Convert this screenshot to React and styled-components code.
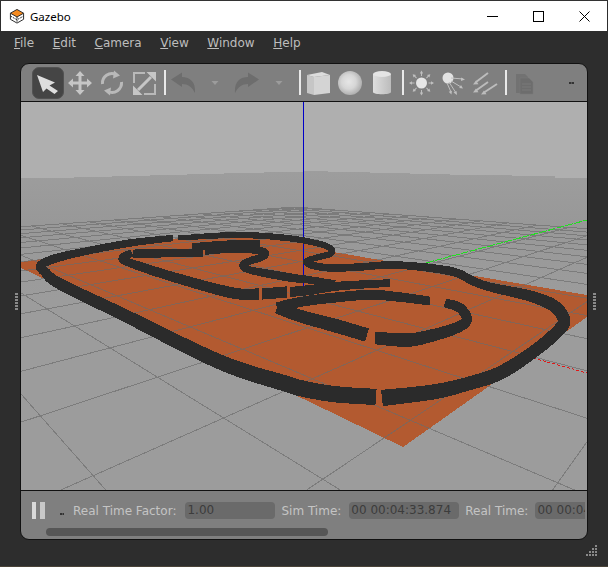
import React from "react";
import styled, { createGlobalStyle } from "styled-components";

const GlobalStyle = createGlobalStyle`
html, body { margin: 0; padding: 0; background: #2d2d2d; }
`;

const Frame = styled.div`
  width: 608px;
  height: 567px;
  display: flex;
  flex-direction: column;
  box-sizing: border-box;
  background: #2d2d2d;
  border-top: 1px solid #333;
  border-bottom: 1px solid #4a4338;
  overflow: hidden;
  font-family: "DejaVu Sans", sans-serif;
  font-size: 12px;
`;

const TitleBar = styled.div`
  height: 30px;
  flex-shrink: 0;
  margin: 0 1px;
  display: flex;
  align-items: center;
  background: #fff;
  color: #000;
  font-family: "Noto Sans", sans-serif;
  font-size: 11.5px;
`;

const AppTitle = styled.div`
  display: flex;
  align-items: center;
  gap: 5px;
  padding-left: 8px;
  flex: 1;
`;

const WinButton = styled.div`
  width: 46px;
  height: 30px;
  display: flex;
  align-items: center;
  justify-content: center;
`;

const MenuBar = styled.div`
  height: 32px;
  flex-shrink: 0;
  display: flex;
  gap: 18.6px;
  padding-left: 14px;
  line-height: 24px;
  color: #bdbdbd;
`;

const MenuKey = styled.span`
  text-decoration: underline;
`;

const Middle = styled.div`
  display: flex;
  flex-shrink: 0;
`;

const Gutter = styled.div`
  width: 20px;
  display: flex;
  align-items: center;
  justify-content: ${(p) => (p.$right ? "flex-start" : "flex-end")};
  padding: ${(p) => (p.$right ? "0 0 0 5px" : "0 2px 0 0")};
  box-sizing: border-box;
`;

const SideHandle = styled.div`
  width: 3px;
  height: 17px;
  background: repeating-linear-gradient(#8a8a8a 0 2px, transparent 2px 3px);
`;

const Panel = styled.div`
  width: 568px;
  height: 477px;
  box-sizing: border-box;
  border: 1px solid #111;
  border-radius: 9px;
  overflow: hidden;
  background: #7f7f7f;
  display: flex;
  flex-direction: column;
`;

const Toolbar = styled.div`
  height: 37px;
  flex-shrink: 0;
  display: flex;
  align-items: center;
  padding-left: 11px;
  border-bottom: 1px solid #111;
`;

const Tool = styled.div`
  width: 32px;
  height: 32px;
  flex-shrink: 0;
  box-sizing: border-box;
  border-radius: 7px;
  background: ${(p) => (p.$active ? "#454545" : "transparent")};
  border: 1px solid ${(p) => (p.$active ? "#525252" : "transparent")};
  svg { display: block; margin: -1px; }
`;

const Sep = styled.div`
  width: 2px;
  height: 25px;
  flex-shrink: 0;
  margin: 0 1px 0 4px;
  background: #e9e9e9;
`;

const MiniDots = styled.div`
  width: 5px;
  height: 2px;
  flex-shrink: 0;
  background: repeating-linear-gradient(90deg, #333 0 2px, #555 2px 3px);
`;

const OverflowDots = styled(MiniDots)`
  margin-left: 29px;
`;

const Scene = styled.div`
  height: 388px;
  flex-shrink: 0;
  background: #afafaf;
  svg { display: block; }
`;

const StatusBar = styled.div`
  height: 48px;
  flex-shrink: 0;
  border-top: 1px solid #111;
  box-sizing: content-box;
`;

const StatusRow = styled.div`
  height: 17px;
  margin: 11px 2px 0 0;
  padding-left: 11px;
  display: flex;
  align-items: center;
  overflow: hidden;
  color: #c4c4c4;
  white-space: nowrap;
`;

const PauseDots = styled(MiniDots)`
  width: 4px;
  margin: 7px 9px 0 15px;
`;

const Label = styled.span`
  flex-shrink: 0;
  margin-right: ${(p) => p.$gap}px;
`;

const Field = styled.div`
  width: ${(p) => p.$w}px;
  height: 17px;
  flex-shrink: 0;
  box-sizing: border-box;
  margin-right: 6px;
  padding-left: 2px;
  border-radius: 4px;
  background: #6a6a6a;
  color: #3c3c3c;
  line-height: 17px;
`;

const ScrollThumb = styled.div`
  width: 282px;
  height: 8px;
  margin: 9px 0 0 25px;
  border-radius: 4px;
  background: #565656;
`;

const BottomRow = styled.div`
  flex: 1;
  display: flex;
  justify-content: flex-end;
  padding: 5px 10px 0 0;
`;

const ICON = "#c6c6c6";
const DIM = "#6d6d6d";

const Icon = ({ children }) => (
  <svg width="32" height="32" viewBox="0 0 32 32">
    {children}
  </svg>
);

const GazeboLogo = () => (
  <svg width="16" height="17" viewBox="0 0 17 17">
    <path d="M1.5 5v6.5l7 4 7-4V5" fill="#fff" stroke="#222" strokeWidth="1" />
    <path d="M8.5 9v6M1.5 8l7 4 7-4" fill="none" stroke="#222" strokeDasharray="2 1" />
    <path d="M8.5 1l7 4-7 4-7-4z" fill="#f58a1f" stroke="#222" strokeWidth="1" />
  </svg>
);

const MoveIcon = () => (
  <Icon>
    <path
      fill={ICON}
      d="M16 4l4.5 5h-3v5.5H23v-3l5 4.5-5 4.5v-3h-5.5v5.5h3L16 28l-4.5-5h3v-5.5H9v3L4 16l5-4.5v3h5.5V9h-3z"
    />
  </Icon>
);

const RotateIcon = () => (
  <Icon>
    <path d="M6.5 17A9.5 9.5 0 0 1 20 7.5M25.5 15A9.5 9.5 0 0 1 12 24.5" fill="none" stroke="#b9b9b9" strokeWidth="3" />
    <path d="M18 3.5l6 5-7 3zM14 28.5l-6-5 7-3z" fill="#b9b9b9" />
  </Icon>
);

const ScaleIcon = () => (
  <Icon>
    <path d="M17 6H6v10M27 17v10H16" fill="none" stroke="#b9b9b9" strokeWidth="2" />
    <path d="M10 23l13-13" stroke={ICON} strokeWidth="3" />
    <path d="M28 5v9.5L18.5 5zM5 28v-9.5L14.5 28z" fill={ICON} />
  </Icon>
);

const UndoIcon = ({ flip }) => (
  <Icon>
    <path
      transform={flip ? "matrix(-1 0 0 1 32 0)" : undefined}
      fill={DIM}
      d="M4 12.5L15 5.5v4.5c8 0 14 5 13 16-3-6-7-9-13-9v3z"
    />
  </Icon>
);

const DropIcon = () => (
  <Icon>
    <path d="M12.5 14h7L16 18z" fill="#9c9c9c" />
  </Icon>
);

const BoxIcon = () => (
  <Icon>
    <path d="M5 8l7 2v18l-7-2z" fill="#c6c6c6" />
    <path d="M12 10l16-2v18l-16 2z" fill="#d4d4d4" />
    <path d="M5 8l15-3 8 3-16 2z" fill="#dcdcdc" />
  </Icon>
);

const SphereIcon = () => (
  <Icon>
    <defs>
      <radialGradient id="ball" cx="0.45" cy="0.45" r="0.6">
        <stop offset="0" stopColor="#e6e6e6" />
        <stop offset="0.5" stopColor="#d6d6d6" />
        <stop offset="1" stopColor="#a8a8a8" />
      </radialGradient>
    </defs>
    <circle cx="16" cy="16" r="12" fill="url(#ball)" />
  </Icon>
);

const CylinderIcon = () => (
  <Icon>
    <defs>
      <linearGradient id="can" x1="0" x2="1" y1="0" y2="0">
        <stop offset="0" stopColor="#dedede" />
        <stop offset="1" stopColor="#bcbcbc" />
      </linearGradient>
    </defs>
    <path d="M7 7v18c0 3 18 3 18 0V7z" fill="url(#can)" />
    <ellipse cx="16" cy="7" rx="9" ry="3" fill="#e4e4e4" />
  </Icon>
);

const SunIcon = () => (
  <Icon>
    <circle cx="16.5" cy="16" r="5.5" fill="#e6e6e6" />
    {[0, 45, 90, 135, 180, 225, 270, 315].map((a) => (
      <g key={a} transform={`rotate(${a} 16.5 16)`}>
        <path d="M16.5 9V6" stroke="#c0c0c0" strokeWidth="1" />
        <path d="M14.8 6.5h3.4L16.5 3.5z" fill="#c0c0c0" />
      </g>
    ))}
  </Icon>
);

const SpotIcon = () => (
  <Icon>
    <circle cx="11" cy="11" r="5.5" fill="#e2e2e2" />
    <path d="M14 11l12 1M14 14l10 6M12 15l7 11M10 16l4 9" stroke="#c0c0c0" strokeWidth="1" />
    <path d="M28 12.5l-4-2v3.5zM26 21.5l-3.8-.6 1.8-3zM20 28l-3.5-2.4 3-1.6zM14.5 27.5l-2.8-2.8 3.2-1z" fill="#c0c0c0" />
  </Icon>
);

const DirectionalIcon = () => (
  <Icon>
    <path d="M19 6L7 15M19 15L7 23.5M28 17l-13 8.5" stroke="#bcbcbc" strokeWidth="2" />
    <path d="M4 17.5l5.5-.3-2.5-3.7zM4 25.5l5.5-.3-2.5-3.7zM12 27.5l5.5-.3-2.5-3.7z" fill="#bcbcbc" />
  </Icon>
);

const CopyIcon = () => (
  <Icon>
    <path d="M8 7h9l3 3v16H8z" fill="#727272" />
    <path d="M12 11h9l4 4v12H12z" fill={DIM} stroke="#7a7a7a" strokeWidth="0.6" />
    <path d="M14 17h9M14 20h9M14 23h9" stroke="#7a7a7a" strokeWidth="1" />
  </Icon>
);

const PauseIcon = () => (
  <svg width="13" height="17" viewBox="0 0 13 17" style={{ flexShrink: 0 }}>
    <rect x="0" y="0" width="4" height="17" fill="#dadada" />
    <rect x="8" y="0" width="5" height="17" fill="#c8c8c8" />
  </svg>
);

const CornerGrip = () => (
  <svg width="12" height="12" viewBox="0 0 12 12">
    {[0, 1, 2, 3].flatMap((r) =>
      [0, 1, 2, 3]
        .filter((c) => c + r >= 3)
        .map((c) => <rect key={`${r}${c}`} x={c * 3} y={r * 3} width="2" height="2" fill="#8a8a8a" />),
    )}
  </svg>
);

// ground plane maps to the view through the two vanishing points
const VX = [-175, 172];
const VY = [780, 172];
const ORIGIN = [304, 297];
const SCALE_X = 0.1012;
const SCALE_Y = 0.0965;

const project = (x, y) => {
  const ax = SCALE_X * x;
  const by = SCALE_Y * y;
  const d = ax + by + 1;
  return [(ax * VX[0] + by * VY[0] + ORIGIN[0]) / d, (ax * VX[1] + by * VY[1] + ORIGIN[1]) / d];
};

const GRID_MIN = -14;
const GRID_MAX = 13;

const gridLine = (fixed, scaleFixed, scaleOther, toPoint) => {
  const lowest = (0.06 - 1 - scaleFixed * fixed) / scaleOther;
  const from = toPoint(Math.max(GRID_MIN, lowest));
  const to = toPoint(GRID_MAX);
  return `M${from[0].toFixed(1)} ${from[1].toFixed(1)}L${to[0].toFixed(1)} ${to[1].toFixed(1)}`;
};

const buildGrid = () => {
  let d = "";
  for (let i = GRID_MIN; i <= GRID_MAX; i++) {
    d += gridLine(i, SCALE_X, SCALE_Y, (y) => project(i, y));
    d += gridLine(i, SCALE_Y, SCALE_X, (x) => project(x, i));
  }
  return d;
};

const TRACK_THICKNESS = 1.25;

// catmull-rom through [x, y, width] points, output as a filled band
const ribbon = (pts) => {
  const left = [];
  const right = [];
  const at = (i) => pts[Math.max(0, Math.min(pts.length - 1, i))];
  for (let i = 0; i < pts.length - 1; i++) {
    const [p0, p1, p2, p3] = [at(i - 1), at(i), at(i + 1), at(i + 2)];
    for (let s = 0; s <= 8; s++) {
      const t = s / 8;
      const cr = (k) =>
        0.5 *
        (2 * p1[k] +
          (p2[k] - p0[k]) * t +
          (2 * p0[k] - 5 * p1[k] + 4 * p2[k] - p3[k]) * t * t +
          (3 * p1[k] - p0[k] - 3 * p2[k] + p3[k]) * t * t * t);
      const dx = 0.5 * (p2[0] - p0[0]) + (2 * p0[0] - 5 * p1[0] + 4 * p2[0] - p3[0]) * t + 1.5 * (3 * p1[0] - p0[0] - 3 * p2[0] + p3[0]) * t * t;
      const dy = 0.5 * (p2[1] - p0[1]) + (2 * p0[1] - 5 * p1[1] + 4 * p2[1] - p3[1]) * t + 1.5 * (3 * p1[1] - p0[1] - 3 * p2[1] + p3[1]) * t * t;
      const len = Math.hypot(dx, dy) || 1;
      const w = ((p1[2] + (p2[2] - p1[2]) * t) / 2) * TRACK_THICKNESS;
      const x = cr(0);
      const y = cr(1);
      left.push(`${(x - (dy / len) * w).toFixed(1)} ${(y + (dx / len) * w).toFixed(1)}`);
      right.unshift(`${(x + (dy / len) * w).toFixed(1)} ${(y - (dx / len) * w).toFixed(1)}`);
    }
  }
  return `M${left.concat(right).join("L")}Z`;
};

const TRACK = [
  [[173, 238, 5], [130, 243, 6], [87, 251, 6], [57, 258, 7], [41, 265, 7], [45, 272, 8], [60, 284, 9], [120, 313, 10], [220, 362, 12], [287, 384, 13], [300, 388, 13], [333, 394, 13], [376, 397, 13]],
  [[382, 398, 13], [433, 392, 12], [467, 384, 11], [500, 373, 11], [533, 352, 10], [557, 332, 10], [564, 320, 10], [554, 306, 10], [530, 296, 9], [490, 287, 7], [473, 281, 7], [450, 271, 7], [397, 265, 6], [360, 267, 6], [333, 268, 6], [315, 266, 6], [306, 262, 5], [315, 258, 5], [330, 254, 5], [331, 249, 5], [320, 244, 5], [287, 238, 5], [237, 235, 5], [178, 238, 4]],
  [[133, 254, 7], [165, 253, 7], [203, 253, 6]],
  [[192, 247, 6], [225, 245, 7], [260, 244, 7]],
  [[205, 251, 6], [235, 249, 6], [262, 251, 6], [264, 256, 6], [250, 261, 6], [243, 265, 6], [250, 270, 6], [287, 277, 7], [310, 280, 6], [335, 284, 6]],
  [[132, 253, 6], [122, 258, 6], [133, 264, 7], [180, 279, 8], [233, 293, 9], [259, 294, 9]],
  [[262, 294, 9], [287, 292, 9]],
  [[290, 292, 8], [310, 290, 8], [340, 286, 7], [390, 283, 6]],
  [[277, 308, 9], [300, 302, 8], [340, 297, 8], [378, 295, 8], [430, 301, 7]],
  [[445, 303, 7], [460, 308, 8], [467, 320, 8], [456, 328, 9], [430, 336, 10], [407, 340, 11], [375, 338, 10]],
  [[367, 335, 11], [333, 325, 11], [300, 316, 10], [277, 308, 9]],
];

const GRID_PATH = buildGrid();
const TRACK_PATHS = TRACK.map(ribbon);

const SceneView = () => (
  <svg width="566" height="388" viewBox="21 102 566 388">
    <defs>
      <linearGradient id="ground" gradientUnits="userSpaceOnUse" x1="0" x2="0" y1="172" y2="490">
        <stop offset="0" stopColor="#9d9d9d" />
        <stop offset="0.16" stopColor="#989898" />
        <stop offset="0.4" stopColor="#9c9c9c" />
        <stop offset="1" stopColor="#9c9c9c" />
      </linearGradient>
    </defs>
    <path
      fill="url(#ground)"
      shapeRendering="crispEdges"
      d="M21 178H74V177H112V176H150V175H187V174H224V173H264V172H304V171H328V172H370V173H410V174H450V175H512V176H555V178H587V490H21Z"
    />
    <path
      d="M21 262L180 238H300L333 252L587 295V317L403 447L310 402L21 268Z"
      fill="#b35a30"
      shapeRendering="crispEdges"
    />
    <path d={GRID_PATH} fill="none" stroke="#6b6b6b" strokeOpacity="0.65" strokeWidth="1" shapeRendering="crispEdges" />
    <path d="M426 263L587 220" stroke="#20e020" strokeWidth="1" strokeDasharray="8 1" shapeRendering="crispEdges" />
    <path d="M533 358L587 373" stroke="#e01818" strokeWidth="1" strokeDasharray="3 2" shapeRendering="crispEdges" />
    <path d="M303.5 102V288" stroke="#0000c8" strokeWidth="1" shapeRendering="crispEdges" />
    {TRACK_PATHS.map((d) => (
      <path key={d} d={d} fill="#2b2b2b" shapeRendering="crispEdges" />
    ))}
  </svg>
);

const MENU = [
  ["F", "ile"],
  ["E", "dit"],
  ["C", "amera"],
  ["V", "iew"],
  ["W", "indow"],
  ["H", "elp"],
];

export default function App() {
  return (
    <>
      <GlobalStyle />
      <Frame>
        <TitleBar>
          <AppTitle>
            <GazeboLogo />
            Gazebo
          </AppTitle>
          <WinButton>
            <svg width="11" height="11" viewBox="0 0 11 11">
              <path d="M0 5.5H11" stroke="#000" />
            </svg>
          </WinButton>
          <WinButton>
            <svg width="11" height="11" viewBox="0 0 11 11">
              <rect x="0.5" y="0.5" width="10" height="10" fill="none" stroke="#000" />
            </svg>
          </WinButton>
          <WinButton>
            <svg width="11" height="11" viewBox="0 0 11 11">
              <path d="M0.5 0.5L10.5 10.5M10.5 0.5L0.5 10.5" stroke="#000" />
            </svg>
          </WinButton>
        </TitleBar>
        <MenuBar>
          {MENU.map(([key, rest]) => (
            <span key={key}>
              <MenuKey>{key}</MenuKey>
              {rest}
            </span>
          ))}
        </MenuBar>
        <Middle>
          <Gutter>
            <SideHandle />
          </Gutter>
          <Panel>
            <Toolbar>
              <Tool $active>
                <Icon>
                  <path fill="#dedede" d="M5 8l18 7.5-5.5 3L26 24l-3.5 3-8-5.5L11 25z" />
                </Icon>
              </Tool>
              <Tool><MoveIcon /></Tool>
              <Tool><RotateIcon /></Tool>
              <Tool><ScaleIcon /></Tool>
              <Sep />
              <Tool><UndoIcon /></Tool>
              <Tool><DropIcon /></Tool>
              <Tool><UndoIcon flip /></Tool>
              <Tool><DropIcon /></Tool>
              <Sep />
              <Tool><BoxIcon /></Tool>
              <Tool><SphereIcon /></Tool>
              <Tool><CylinderIcon /></Tool>
              <Sep />
              <Tool><SunIcon /></Tool>
              <Tool><SpotIcon /></Tool>
              <Tool><DirectionalIcon /></Tool>
              <Sep />
              <Tool><CopyIcon /></Tool>
              <OverflowDots />
            </Toolbar>
            <Scene>
              <SceneView />
            </Scene>
            <StatusBar>
              <StatusRow>
                <PauseIcon />
                <PauseDots />
                <Label $gap={9}>Real Time Factor:</Label>
                <Field $w={90}>1.00</Field>
                <Label $gap={8}>Sim Time:</Label>
                <Field $w={110}>00 00:04:33.874</Field>
                <Label $gap={7}>Real Time:</Label>
                <Field $w={110}>00 00:04:33.874</Field>
              </StatusRow>
              <ScrollThumb />
            </StatusBar>
          </Panel>
          <Gutter $right>
            <SideHandle />
          </Gutter>
        </Middle>
        <BottomRow>
          <CornerGrip />
        </BottomRow>
      </Frame>
    </>
  );
}
